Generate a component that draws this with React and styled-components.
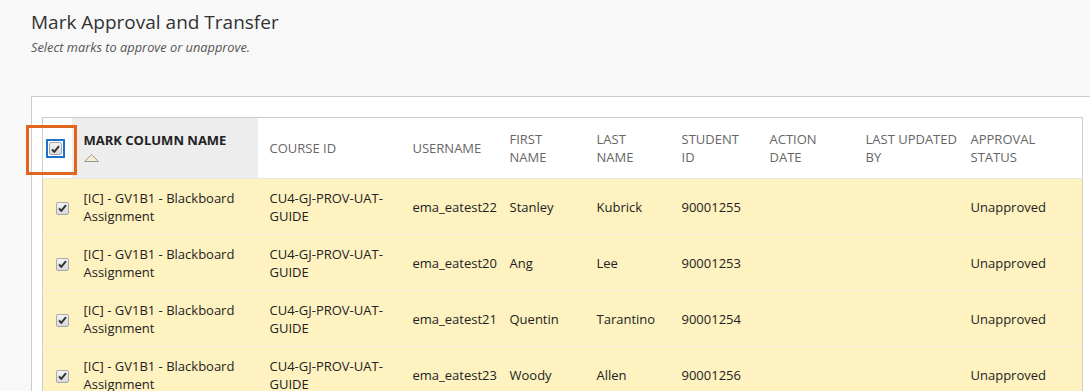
import React from "react";
import styled, { createGlobalStyle } from "styled-components";

const GlobalStyle = createGlobalStyle`
  html, body {
    margin: 0;
    background: #f8f8f8;
    overflow: hidden;
  }
  body {
    font-family: "Open Sans", "Liberation Sans", sans-serif;
    color: #333;
  }
`;

const Page = styled.div`
  padding: 8px 0 0 31px;
`;

const Title = styled.h1`
  margin: 0;
  font-size: 19px;
  font-weight: 400;
  line-height: 28px;
  color: #333;
`;

const Subtitle = styled.p`
  margin: 2px 0 0;
  font-size: 12.8px;
  font-style: italic;
  line-height: 18px;
  color: #555;
`;

const Panel = styled.div`
  margin-top: 40px;
  width: 1062px;
  background: #fff;
  border: 1px solid #ccc;
  border-right: none;
  padding: 20px 0 0 10px;
`;

const Table = styled.table`
  width: 1041px;
  table-layout: fixed;
  border-collapse: collapse;
  border: 1px solid #ccc;
  border-bottom: none;
  font-size: 13px;
`;

const HeadCell = styled.th`
  height: 60px;
  padding: 0 0 0 12px;
  text-align: left;
  vertical-align: middle;
  white-space: nowrap;
  font-weight: ${(p) => (p.sorted ? 700 : 400)};
  color: ${(p) => (p.sorted ? "#222" : "#666")};
  background: ${(p) => (p.sorted ? "#ededed" : "#fff")};
  text-transform: uppercase;
  line-height: 18px;
  border-bottom: 1px solid #e8e8e8;
`;

const HeadLine = styled.span`
  display: block;
`;

const SortStack = styled.div`
  display: flex;
  flex-direction: column;
  gap: 5px;
  margin-top: -4px;
`;

const CheckHead = styled.th`
  position: relative;
  padding: 0 0 0 3px;
  text-align: left;
  border-bottom: 1px solid #e8e8e8;
  background: #fff;
`;

const Row = styled.tr`
  background: #fef2c0;
  border-bottom: 1px solid #f1ecdc;
`;

const Cell = styled.td`
  height: 55px;
  padding: 0 4px 0 12px;
  vertical-align: middle;
  line-height: 18px;
  color: #222;
`;

const CheckCell = styled.td`
  padding: 0 0 0 13px;
  vertical-align: middle;
`;

const Box = styled.span`
  display: inline-flex;
  align-items: center;
  justify-content: center;
  box-sizing: border-box;
  width: 13px;
  height: 13px;
  border: 1px solid #a9a9a9;
  border-radius: 2px;
  background: linear-gradient(#f4f4f4, #d8d8d8);
  vertical-align: middle;
`;

const Focus = styled.span`
  display: inline-flex;
  padding: 1px;
  border: 2px solid #1a73c9;
  vertical-align: middle;
`;

const Callout = styled.span`
  position: absolute;
  left: -17px;
  top: 7px;
  width: 45px;
  height: 44px;
  border: 3px solid #e0661f;
  pointer-events: none;
`;

const Check = () => (
  <Box>
    <svg width="9" height="8" viewBox="0 0 9 8">
      <path d="M1 4.5 L3.3 6.8 L8 1.2" fill="none" stroke="#333" strokeWidth="2" />
    </svg>
  </Box>
);

const SortUp = () => (
  <svg width="15" height="8" viewBox="0 0 15 8">
    <path d="M0.5 7.5 L7.5 0.7 L14.5 7.5 Z" fill="#f7efd2" stroke="#999" strokeWidth="1" />
  </svg>
);

const columns = [
  [["Course ID"], 143],
  [["Username"], 97],
  [["First", "name"], 87],
  [["Last", "name"], 85],
  [["Student", "ID"], 88],
  [["Action", "date"], 96],
  [["Last updated", "by"], 105],
  [["Approval", "status"], 124],
];

const rows = [
  ["ema_eatest22", "Stanley", "Kubrick", "90001255"],
  ["ema_eatest20", "Ang", "Lee", "90001253"],
  ["ema_eatest21", "Quentin", "Tarantino", "90001254"],
  ["ema_eatest23", "Woody", "Allen", "90001256"],
];

const App = () => (
  <>
    <GlobalStyle />
    <Page>
      <Title>Mark Approval and Transfer</Title>
      <Subtitle>Select marks to approve or unapprove.</Subtitle>
      <Panel>
        <Table>
          <colgroup>
            <col style={{ width: 29 }} />
            <col style={{ width: 186 }} />
            {columns.map(([lines, w]) => (
              <col key={lines.join(" ")} style={{ width: w }} />
            ))}
          </colgroup>
          <thead>
            <tr>
              <CheckHead>
                <Focus>
                  <Check />
                </Focus>
                <Callout />
              </CheckHead>
              <HeadCell sorted>
                <SortStack>
                  <span>Mark Column Name</span>
                  <SortUp />
                </SortStack>
              </HeadCell>
              {columns.map(([lines]) => (
                <HeadCell key={lines.join(" ")}>
                  {lines.map((line) => (
                    <HeadLine key={line}>{line}</HeadLine>
                  ))}
                </HeadCell>
              ))}
            </tr>
          </thead>
          <tbody>
            {rows.map(([user, first, last, id]) => (
              <Row key={user}>
                <CheckCell>
                  <Check />
                </CheckCell>
                <Cell>[IC] - GV1B1 - Blackboard Assignment</Cell>
                <Cell>CU4-GJ-PROV-UAT-GUIDE</Cell>
                <Cell>{user}</Cell>
                <Cell>{first}</Cell>
                <Cell>{last}</Cell>
                <Cell>{id}</Cell>
                <Cell />
                <Cell />
                <Cell>Unapproved</Cell>
              </Row>
            ))}
          </tbody>
        </Table>
      </Panel>
    </Page>
  </>
);

export default App;
